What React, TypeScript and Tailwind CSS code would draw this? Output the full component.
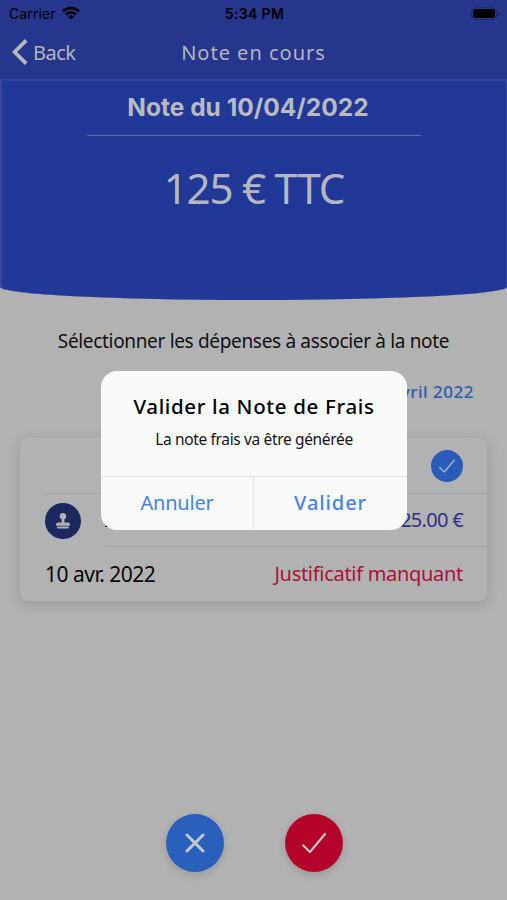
import clsx from "clsx";

const expense = {
    label: "A",
    amount: "125.00 €",
    date: "10 avr. 2022",
    status: "Justificatif manquant",
};

const CheckIcon = ({ className }: { className?: string }) => (
    <svg viewBox="0 0 24 24" fill="none" stroke="currentColor" strokeLinecap="round" strokeLinejoin="round" className={className}>
        <path d="M1 14.2 8 21 23 3" />
    </svg>
);

const StampIcon = () => (
    <svg viewBox="0 0 16 18" className="w-[16px] h-[18px]" fill="currentColor">
        <circle cx="8" cy="4.3" r="3.2" />
        <path d="M6.6 6h2.8v5H6.6z" />
        <path d="M3 10.500h10a2 2 0 0 1 2 2v1.200H1v-1.200a2 2 0 0 1 2-2z" />
        <rect x="2" y="14.400" width="12" height="2" rx=".8" />
    </svg>
);

const StatusBar = () => (
    <div className="h-[27px] flex items-center justify-between pl-[9px] pr-[7px] text-black font-['Inter',sans-serif]">
        <div className="flex flex-1 items-center gap-[6px]">
            <span className="text-[14px] leading-[27px] tracking-[0.1px]">Carrier</span>
            <svg viewBox="0 0 18 14" className="w-[18px] h-[14px] mb-px" fill="none" stroke="currentColor" strokeWidth="2.6">
                <path d="M1 5.2a11.6 11.6 0 0 1 16 0" />
                <path d="M4 8.5a7.2 7.2 0 0 1 10 0" />
                <path d="M6.2 10.7a4 4 0 0 1 5.6 0L9 13.5z" fill="currentColor" stroke="none" />
            </svg>
        </div>
        <span className="text-[14px] leading-[28px] pt-px font-semibold tracking-[0.35px]">5:34 PM</span>
        <div className="flex flex-1 justify-end items-center gap-px">
            <div className="w-[26px] h-[13px] rounded-[4px] border border-[#1c2a72] p-px">
                <div className="h-full rounded-[2px] bg-black" />
            </div>
            <div className="w-[2px] h-[4px] rounded-r-full bg-[#1c2a72]" />
        </div>
    </div>
);

const NavBar = () => (
    <div className="h-[52px] grid grid-cols-[1fr_auto_1fr] items-center text-[#b4b5bd]">
        <div className="flex items-center pl-[12px] gap-[5px] pb-px">
            <svg viewBox="0 0 16 26" className="w-[16px] h-[26px] mb-[2px]" fill="none" stroke="currentColor" strokeWidth="3.8">
                <path d="M14.2 1.4 2.6 13l11.6 11.6" />
            </svg>
            <span className="text-[20px] leading-[50px] tracking-[-0.5px]">Back</span>
        </div>
        <span className="text-[20px] leading-[50px] tracking-[1px] pb-px">Note en cours</span>
        <div />
    </div>
);

const RoundButton = ({ color, children }: { color: string; children: React.ReactNode }) => (
    <button className={clsx("size-[58px] rounded-full flex items-center justify-center text-[#c4c8d0] shadow-[0_3px_8px_rgba(0,0,0,0.14)]", color)}>
        {children}
    </button>
);

const ExpenseCard = () => (
    <div className="mx-5 h-[163px] rounded-lg bg-[#b2b2b2] shadow-[0_3px_14px_rgba(0,0,0,0.15)]">
        <div className="ml-6 h-[56px] pr-6 flex items-center justify-end border-b border-[#a4a4a4]">
            <div className="size-8 rounded-full bg-[#285cb8] text-[#b2bac8] flex items-center justify-center">
                <CheckIcon className="size-[16px] stroke-[1.8]" />
            </div>
        </div>
        <div className="pl-[25px] h-[53px] flex items-center">
            <div className="size-9 rounded-full bg-[#1c2860] text-[#b2b2b2] flex items-center justify-center">
                <StampIcon />
            </div>
            <div className="ml-6 flex-1 h-full pr-6 flex justify-between border-b border-[#a4a4a4] text-[20px] leading-[51px]">
                <span className="text-black">{expense.label}</span>
                <span className="text-[#30308c] tracking-[-0.7px]">{expense.amount}</span>
            </div>
        </div>
        <div className="pl-[25px] pr-6 h-[54px] flex justify-between leading-[54px]">
            <span className="text-[21px] tracking-[-0.5px] text-[#080808]">{expense.date}</span>
            <span className="text-[20px] tracking-[-0.3px] text-[#ac1238]">{expense.status}</span>
        </div>
    </div>
);

const ConfirmDialog = () => (
    <div role="dialog" className="absolute left-[101px] top-[371px] w-[306px] h-[159px] rounded-2xl bg-[#f9fafa] overflow-hidden flex flex-col text-center">
        <div className="flex-1 pt-[20px]">
            <h2 className="text-[20.5px] leading-[30px] font-medium tracking-[0.65px] text-black whitespace-nowrap">Valider la Note de Frais</h2>
            <p className="mt-[6px] text-[15.5px] leading-[24px] tracking-[-0.35px] text-[#161616]">La note frais va être générée</p>
        </div>
        <div className="h-[54px] grid grid-cols-2 border-t border-[#e1e2e3] text-[20px] leading-[51px] text-[#4583ef]">
            <button className="border-r border-[#e1e2e3] pb-[2px] tracking-[-0.2px]">Annuler</button>
            <button className="font-medium tracking-[0.9px] pb-[2px]">Valider</button>
        </div>
    </div>
);

const App = () => {
    return (
        <div className="relative w-[507px] h-[900px] overflow-hidden flex flex-col bg-[#b2b2b2] font-['Noto_Sans',sans-serif]">
            <header className="h-[79px] bg-[#25368c]">
                <StatusBar />
                <NavBar />
            </header>

            <section className="h-[221px] flex flex-col items-center bg-[#213896] border-t-2 border-l-2 border-r border-[#33489b] [border-bottom-left-radius:50%_13px] [border-bottom-right-radius:50%_13px]">
                <h1 className="h-[54px] pr-[12px] leading-[53px] text-[24.5px] font-bold text-[#b9bac0] font-['Inter',sans-serif] whitespace-nowrap">Note du 10/04/2022</h1>
                <div className="w-[334px] h-px bg-[#586ba9]" />
                <div className="mt-[21px] text-[42px] leading-[62px] font-normal tracking-[-1.2px] text-[#b5b7c0] whitespace-nowrap">125 € TTC</div>
            </section>

            <p className="mt-[26px] text-center text-[19px] leading-[31px] tracking-[-0.33px] text-[#111] whitespace-nowrap">
                Sélectionner les dépenses à associer à la note
            </p>
            <p className="mt-[23px] mb-[45px] pr-[33px] text-right text-[17px] leading-[24px] font-medium tracking-[0.5px] text-[#2c5cb2] h-[13px]">avril 2022</p>

            <ExpenseCard />

            <div className="mt-auto mb-[28px] pl-[11px] pr-[9px] flex justify-center gap-[61px]">
                <RoundButton color="bg-[#2a60bb]">
                    <svg viewBox="0 0 20 20" className="size-[20px]" fill="none" stroke="currentColor" strokeWidth="3" strokeLinecap="round">
                        <path d="m2 2 16 16M18 2 2 18" />
                    </svg>
                </RoundButton>
                <RoundButton color="bg-[#b50429]">
                    <CheckIcon className="size-[24px] stroke-[2]" />
                </RoundButton>
            </div>

            <ConfirmDialog />
        </div>
    );
};
export default App;
